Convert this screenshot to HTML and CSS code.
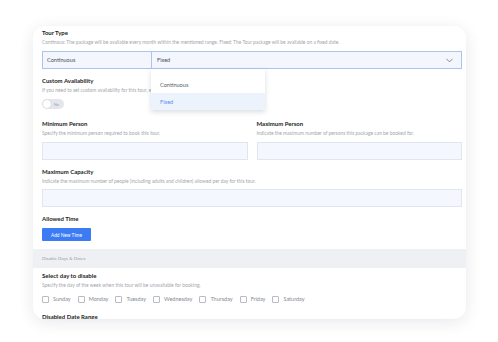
FILE: index.html
```html
<!DOCTYPE html>
<html lang="en">
<head>
  <meta charset="UTF-8" />
  <meta name="viewport" content="width=device-width, initial-scale=1.0" />
  <title>Tour Settings</title>
  <link rel="stylesheet" href="styles.css">
</head>
<body>
  <div class="card">
    <div class="section">
      <div class="label">Tour Type</div>
      <div class="hint">Continous: The package will be available every month within the mentioned range. Fixed: The Tour package will be available on a fixed date.</div>
      <div class="select-wrap">
        <div class="select">Continuous</div>
        <div class="select-open">
          <span>Fixed</span>
          <svg class="chevron" viewBox="0 0 10 6" width="7" height="5">
            <path d="M1 1l4 4 4-4" fill="none" stroke="#6b7280" stroke-width="1.2" stroke-linecap="round" stroke-linejoin="round"/>
          </svg>
        </div>
        <div class="menu">
          <div class="option">Continuous</div>
          <div class="option active">Fixed</div>
        </div>
      </div>

      <div class="label mt-avail">Custom Availability</div>
      <div class="hint">If you need to set custom availability for this tour, enable this option.</div>
      <div class="toggle">
        <span class="knob"></span>
        <span class="toggle-text">No</span>
      </div>

      <div class="row">
        <div class="col">
          <div class="label">Minimum Person</div>
          <div class="hint">Specify the minimum person required to book this tour.</div>
          <div class="input"></div>
        </div>
        <div class="col">
          <div class="label">Maximum Person</div>
          <div class="hint">Indicate the maximum number of persons this package can be booked for.</div>
          <div class="input"></div>
        </div>
      </div>

      <div class="label mt-cap">Maximum Capacity</div>
      <div class="hint hint-cap">Indicate the maximum number of people (including adults and children) allowed per day for this tour.</div>
      <div class="input input-cap"></div>

      <div class="label mt-cap">Allowed Time</div>
      <button class="btn">Add New Time</button>
    </div>

    <div class="band">Disable Days &amp; Dates</div>

    <div class="section">
      <div class="label mt-days">Select day to disable</div>
      <div class="hint">Specify the day of the week when this tour will be unavailable for booking.</div>
      <div class="days">
        <label class="day"><span class="box"></span>Sunday</label>
        <label class="day"><span class="box"></span>Monday</label>
        <label class="day"><span class="box"></span>Tuesday</label>
        <label class="day"><span class="box"></span>Wednesday</label>
        <label class="day"><span class="box"></span>Thursday</label>
        <label class="day"><span class="box"></span>Friday</label>
        <label class="day"><span class="box"></span>Saturday</label>
      </div>
      <div class="label mt-range">Disabled Date Range</div>
    </div>
  </div>
</body>
</html>
```

FILE: styles.css
```css
* {
  box-sizing: border-box;
  margin: 0;
  padding: 0;
  font-family: 'Lato', 'Liberation Sans', sans-serif;
}
body {
  background-color: #fff;
  width: 498px;
  height: 342px;
  overflow: hidden;
}
.card {
  margin: 26px 0 0 33px;
  width: 433px;
  height: 293px;
  background-color: #fff;
  border-radius: 12px;
  box-shadow: 0 3px 16px rgba(20, 30, 60, 0.10);
  overflow: hidden;
}
.section {
  padding: 3px 4px 0 9px;
}
.label {
  font-size: 6px;
  line-height: 8px;
  font-weight: 700;
  color: #1c1d22;
}
.hint {
  font-size: 4.9px;
  line-height: 6px;
  margin-top: 2px;
  color: #a3a6ad;
  white-space: nowrap;
}
.select-wrap {
  position: relative;
  margin-top: 6px;
  height: 18px;
}
.select {
  height: 18px;
  border: 1px solid #a9c3f3;
  background-color: #f3f6fd;
  font-size: 5.6px;
  line-height: 16px;
  color: #4b4f58;
  padding-left: 4px;
}
.select-open {
  position: absolute;
  left: 109px;
  right: 0;
  top: 0;
  height: 18px;
  border: 1px solid #a9c3f3;
  background-color: #f3f6fd;
  font-size: 5.6px;
  line-height: 16px;
  color: #4b4f58;
  padding: 0 8px 0 5px;
  display: flex;
  justify-content: space-between;
  align-items: center;
}
.chevron {
  display: block;
}
.menu {
  position: absolute;
  left: 109px;
  top: 18px;
  width: 114px;
  padding-top: 7px;
  background-color: #fff;
  box-shadow: 0 2px 5px rgba(30, 40, 70, 0.16);
  z-index: 2;
}
.option {
  height: 17px;
  line-height: 17px;
  padding-left: 9px;
  font-size: 5.6px;
  color: #5a5e66;
}
.option.active {
  background-color: #edf3fd;
  color: #5b8ff0;
}
.mt-avail {
  margin-top: 8px;
}
.toggle {
  margin-top: 6px;
  width: 22px;
  height: 10px;
  border-radius: 5px;
  background-color: #e3e6ec;
  display: flex;
  align-items: center;
  padding-left: 1px;
  gap: 3px;
}
.knob {
  width: 8px;
  height: 8px;
  border-radius: 50%;
  background-color: #fff;
  box-shadow: 0 0 1px rgba(0, 0, 0, 0.25);
}
.toggle-text {
  font-size: 3.8px;
  color: #9ba0a8;
}
.row {
  display: flex;
  gap: 9px;
  margin-top: 11px;
}
.col {
  flex: 1;
}
.input {
  margin-top: 6px;
  height: 18px;
  border: 1px solid #dfe6f2;
  background-color: #f4f7fd;
}
.mt-cap {
  margin-top: 8px;
}
.hint-cap {
  margin-top: 2px;
}
.input-cap {
  margin-top: 5px;
}
.btn {
  display: block;
  margin-top: 5px;
  width: 49px;
  height: 13px;
  border: none;
  border-radius: 1px;
  background-color: #3b7bf3;
  color: #fff;
  font-size: 4.8px;
}
.band {
  margin-top: 8px;
  height: 19px;
  line-height: 19px;
  padding-left: 9px;
  background-color: #eff0f4;
  font-size: 4.6px;
  color: #9a9da5;
}
.mt-days {
  margin-top: 1px;
}
.days {
  display: flex;
  gap: 7px;
  margin-top: 7px;
  height: 8px;
}
.day {
  display: flex;
  align-items: center;
  gap: 4px;
  font-size: 5.5px;
  color: #858a94;
}
.box {
  width: 7px;
  height: 7px;
  border: 1px solid #b7bbc4;
  border-radius: 1px;
}
.mt-range {
  margin-top: 10px;
}
```
